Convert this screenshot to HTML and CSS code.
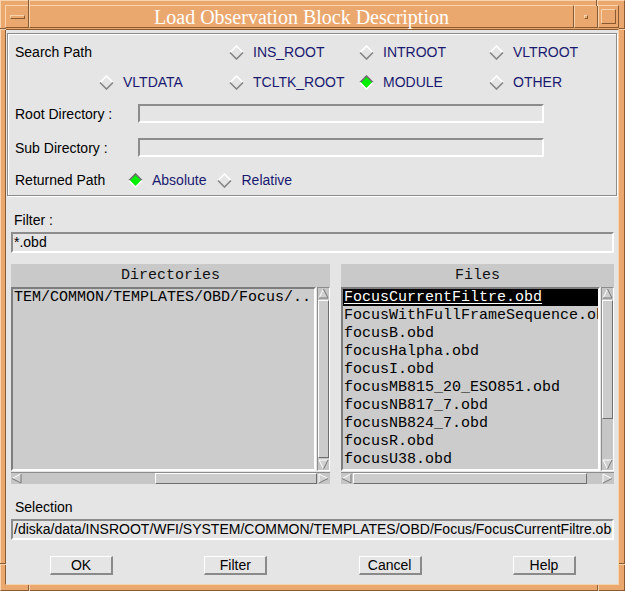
FILE: index.html
```html
<!DOCTYPE html>
<html>
<head>
<meta charset="utf-8">
<link rel="stylesheet" href="styles.css">
</head>
<body>
<div class="window">
  <span class="notch nv" style="left:27px;top:-1px"></span>
  <span class="notch nv" style="left:595px;top:-1px"></span>
  <span class="notch nv" style="left:27px;bottom:-1px"></span>
  <span class="notch nv" style="left:596px;bottom:-1px"></span>
  <span class="notch nh" style="left:-1px;top:27px"></span>
  <span class="notch nh" style="right:-1px;top:27px"></span>
  <span class="notch nh" style="left:-1px;top:562px"></span>
  <span class="notch nh" style="right:-1px;top:562px"></span>

  <div class="titlebar">
    <div class="tb-seg tb-menu"><span class="menu-bar"></span></div>
    <div class="tb-seg tb-title">Load Observation Block Description</div>
    <div class="tb-seg tb-min"><span class="min-dot"></span></div>
    <div class="tb-seg tb-max"><span class="max-box"></span></div>
  </div>

  <div class="content">
    <div class="group">
      <div class="radio-grid">
        <div class="label">Search Path</div>
        <div></div>
        <div class="radio"><svg class="dia" viewBox="0 0 15 15"><path d="M1 7.5L7.5 1L14 7.5" fill="none" stroke="#ffffff" stroke-width="1.6"/><path d="M1 7.5L7.5 14L14 7.5" fill="none" stroke="#858585" stroke-width="1.6"/></svg><span>INS_ROOT</span></div>
        <div class="radio"><svg class="dia" viewBox="0 0 15 15"><path d="M1 7.5L7.5 1L14 7.5" fill="none" stroke="#ffffff" stroke-width="1.6"/><path d="M1 7.5L7.5 14L14 7.5" fill="none" stroke="#858585" stroke-width="1.6"/></svg><span>INTROOT</span></div>
        <div class="radio"><svg class="dia" viewBox="0 0 15 15"><path d="M1 7.5L7.5 1L14 7.5" fill="none" stroke="#ffffff" stroke-width="1.6"/><path d="M1 7.5L7.5 14L14 7.5" fill="none" stroke="#858585" stroke-width="1.6"/></svg><span>VLTROOT</span></div>

        <div></div>
        <div class="radio"><svg class="dia" viewBox="0 0 15 15"><path d="M1 7.5L7.5 1L14 7.5" fill="none" stroke="#ffffff" stroke-width="1.6"/><path d="M1 7.5L7.5 14L14 7.5" fill="none" stroke="#858585" stroke-width="1.6"/></svg><span>VLTDATA</span></div>
        <div class="radio"><svg class="dia" viewBox="0 0 15 15"><path d="M1 7.5L7.5 1L14 7.5" fill="none" stroke="#ffffff" stroke-width="1.6"/><path d="M1 7.5L7.5 14L14 7.5" fill="none" stroke="#858585" stroke-width="1.6"/></svg><span>TCLTK_ROOT</span></div>
        <div class="radio"><svg class="dia" viewBox="0 0 15 15"><polygon points="7.5,1 14,7.5 7.5,14 1,7.5" fill="#00f000"/><path d="M1 7.5L7.5 1L14 7.5" fill="none" stroke="#6e6e6e" stroke-width="1.6"/><path d="M1 7.5L7.5 14L14 7.5" fill="none" stroke="#ffffff" stroke-width="1.6"/></svg><span>MODULE</span></div>
        <div class="radio"><svg class="dia" viewBox="0 0 15 15"><path d="M1 7.5L7.5 1L14 7.5" fill="none" stroke="#ffffff" stroke-width="1.6"/><path d="M1 7.5L7.5 14L14 7.5" fill="none" stroke="#858585" stroke-width="1.6"/></svg><span>OTHER</span></div>
      </div>

      <div class="field-row first">
        <span class="field-label">Root Directory :</span>
        <div class="entry short"></div>
      </div>
      <div class="field-row second">
        <span class="field-label">Sub Directory :</span>
        <div class="entry short"></div>
      </div>
      <div class="returned-row">
        <span class="ret-label">Returned Path</span>
        <div class="radio"><svg class="dia" viewBox="0 0 15 15"><polygon points="7.5,1 14,7.5 7.5,14 1,7.5" fill="#00f000"/><path d="M1 7.5L7.5 1L14 7.5" fill="none" stroke="#6e6e6e" stroke-width="1.6"/><path d="M1 7.5L7.5 14L14 7.5" fill="none" stroke="#ffffff" stroke-width="1.6"/></svg><span>Absolute</span></div>
        <div class="radio rel"><svg class="dia" viewBox="0 0 15 15"><path d="M1 7.5L7.5 1L14 7.5" fill="none" stroke="#ffffff" stroke-width="1.6"/><path d="M1 7.5L7.5 14L14 7.5" fill="none" stroke="#858585" stroke-width="1.6"/></svg><span>Relative</span></div>
      </div>
    </div>

    <div class="lower">
      <div class="filter-label">Filter :</div>
      <div class="entry wide">*.obd</div>

      <div class="panes">
        <div class="pane dirs">
          <div class="pane-head">Directories</div>
          <div class="pane-body">
            <div class="list">
              <div class="item">TEM/COMMON/TEMPLATES/OBD/Focus/..</div>
            </div>
            <div class="vscroll">
              <svg class="arr" viewBox="0 0 11 11"><polygon points="5.5,1 10,10 1,10" fill="#d0d0d0"/><path d="M1 10L5.5 1" stroke="#fff" fill="none"/><path d="M5.5 1L10 10L1 10" stroke="#777" fill="none"/></svg>
              <div class="track-v"><div class="thumb-v" style="height:100%"></div></div>
              <svg class="arr" viewBox="0 0 11 11"><polygon points="1,1 10,1 5.5,10" fill="#d0d0d0"/><path d="M5.5 10L1 1L10 1" stroke="#fff" fill="none"/><path d="M10 1L5.5 10" stroke="#777" fill="none"/></svg>
            </div>
            <div class="hscroll">
              <svg class="arr-h" viewBox="0 0 11 11"><polygon points="1,5.5 10,1 10,10" fill="#d0d0d0"/><path d="M10 1L1 5.5" stroke="#fff" fill="none"/><path d="M1 5.5L10 10L10 1" stroke="#777" fill="none"/></svg>
              <div class="track-h"><div class="thumb-h" style="margin-left:133px;width:162px"></div></div>
              <svg class="arr-h end" viewBox="0 0 11 11"><polygon points="1,1 10,5.5 1,10" fill="#d0d0d0"/><path d="M1 10L1 1L10 5.5" stroke="#fff" fill="none"/><path d="M10 5.5L1 10" stroke="#777" fill="none"/></svg>
            </div>
          </div>
        </div>

        <div class="pane files">
          <div class="pane-head">Files</div>
          <div class="pane-body">
            <div class="list">
              <div class="item selected"><span>FocusCurrentFiltre.obd</span></div>
              <div class="item">FocusWithFullFrameSequence.obd</div>
              <div class="item">focusB.obd</div>
              <div class="item">focusHalpha.obd</div>
              <div class="item">focusI.obd</div>
              <div class="item">focusMB815_20_ESO851.obd</div>
              <div class="item">focusNB817_7.obd</div>
              <div class="item">focusNB824_7.obd</div>
              <div class="item">focusR.obd</div>
              <div class="item">focusU38.obd</div>
            </div>
            <div class="vscroll">
              <svg class="arr" viewBox="0 0 11 11"><polygon points="5.5,1 10,10 1,10" fill="#d0d0d0"/><path d="M1 10L5.5 1" stroke="#fff" fill="none"/><path d="M5.5 1L10 10L1 10" stroke="#777" fill="none"/></svg>
              <div class="track-v"><div class="thumb-v" style="height:119px"></div></div>
              <svg class="arr" viewBox="0 0 11 11"><polygon points="1,1 10,1 5.5,10" fill="#d0d0d0"/><path d="M5.5 10L1 1L10 1" stroke="#fff" fill="none"/><path d="M10 1L5.5 10" stroke="#777" fill="none"/></svg>
            </div>
            <div class="hscroll">
              <svg class="arr-h" viewBox="0 0 11 11"><polygon points="1,5.5 10,1 10,10" fill="#d0d0d0"/><path d="M10 1L1 5.5" stroke="#fff" fill="none"/><path d="M1 5.5L10 10L10 1" stroke="#777" fill="none"/></svg>
              <div class="track-h"><div class="thumb-h" style="margin-left:1px;width:234px"></div></div>
              <svg class="arr-h end" viewBox="0 0 11 11"><polygon points="1,1 10,5.5 1,10" fill="#d0d0d0"/><path d="M1 10L1 1L10 5.5" stroke="#fff" fill="none"/><path d="M10 5.5L1 10" stroke="#777" fill="none"/></svg>
            </div>
          </div>
        </div>
      </div>

      <div class="sel-label">Selection</div>
      <div class="entry wide sel">/diska/data/INSROOT/WFI/SYSTEM/COMMON/TEMPLATES/OBD/Focus/FocusCurrentFiltre.obd</div>

      <div class="buttons">
        <div class="btn">OK</div>
        <div class="btn">Filter</div>
        <div class="btn">Cancel</div>
        <div class="btn">Help</div>
      </div>
    </div>
  </div>
</div>
</body>
</html>
```

FILE: styles.css
```css
html, body {
  margin: 0;
  padding: 0;
}
body {
  width: 625px;
  height: 591px;
  overflow: hidden;
  font-family: "Liberation Sans", Arial, sans-serif;
  font-size: 14px;
  color: #000;
}

.window {
  position: relative;
  box-sizing: border-box;
  width: 625px;
  height: 591px;
  background: #eba86e;
  border-style: solid;
  border-width: 1px;
  border-color: #f7d3ae #8a5a30 #8a5a30 #f7d3ae;
  padding: 4px 5px 5px 4px;
  display: flex;
  flex-direction: column;
  gap: 1px;
}

.notch {
  position: absolute;
  box-sizing: border-box;
}
.notch.nv {
  width: 2px;
  height: 6px;
  border-left: 1px solid #8a5a30;
  border-right: 1px solid #f7d3ae;
}
.notch.nh {
  width: 6px;
  height: 2px;
  border-top: 1px solid #8a5a30;
  border-bottom: 1px solid #f7d3ae;
}

/* title bar */
.titlebar {
  display: flex;
  height: 23px;
  flex: none;
}
.tb-seg {
  box-sizing: border-box;
  height: 23px;
  border-style: solid;
  border-width: 1px;
  border-color: #f7d3ae #8a5a30 #8a5a30 #f7d3ae;
  background: #eba86e;
  display: flex;
  align-items: center;
  justify-content: center;
}
.tb-menu { width: 24px; }
.tb-title {
  flex: 1;
  font-family: "Liberation Serif", "Times New Roman", serif;
  font-size: 20px;
  line-height: 20px;
  color: #ffffff;
  padding-top: 1px;
}
.tb-min { width: 24px; }
.tb-max { width: 21px; }

.menu-bar {
  box-sizing: border-box;
  width: 15px;
  height: 4px;
  border-style: solid;
  border-width: 1px;
  border-color: #f7d3ae #8a5a30 #8a5a30 #f7d3ae;
}
.min-dot {
  box-sizing: border-box;
  width: 4px;
  height: 4px;
  border-style: solid;
  border-width: 1px;
  border-color: #f7d3ae #8a5a30 #8a5a30 #f7d3ae;
}
.max-box {
  box-sizing: border-box;
  width: 15px;
  height: 15px;
  border-style: solid;
  border-width: 1px;
  border-color: #f7d3ae #8a5a30 #8a5a30 #f7d3ae;
}

/* content */
.content {
  flex: 1;
  box-sizing: border-box;
  background: #e5e5e5;
  border-style: solid;
  border-width: 1px;
  border-color: #8a5a30 #f7d3ae #f7d3ae #8a5a30;
  display: flex;
  flex-direction: column;
}

.group {
  margin: 3px 1px 0 1px;
  border: 1px solid #8c8c8c;
  box-shadow: inset 1px 1px 0 #ffffff, 1px 1px 0 #ffffff;
  padding: 3px 8px 5px 7px;
}

.radio-grid {
  display: grid;
  grid-template-columns: 84px 130px 130px 130px auto;
  grid-auto-rows: 30px;
  align-items: center;
}
.label, .field-label, .ret-label {
  white-space: nowrap;
}

.radio {
  display: flex;
  align-items: center;
  gap: 9px;
  color: #191970;
  white-space: nowrap;
}
.dia {
  width: 15px;
  height: 15px;
  flex: none;
}

.field-row {
  display: flex;
  align-items: center;
  height: 19px;
}
.field-row.first { margin-top: 7px; }
.field-row.second { margin-top: 15px; }
.field-label { width: 123px; }

.entry {
  box-sizing: border-box;
  border-style: solid;
  border-width: 2px;
  border-color: #8c8c8c #ffffff #ffffff #8c8c8c;
  background: #e5e5e5;
}
.entry.short {
  width: 406px;
  height: 19px;
}

.returned-row {
  display: flex;
  align-items: center;
  height: 20px;
  margin-top: 13px;
}
.ret-label { width: 113px; }
.radio.rel { margin-left: 11px; }

/* lower part */
.lower {
  display: flex;
  flex-direction: column;
  padding: 0 4px 0 5px;
}
.filter-label {
  margin-top: 16px;
  line-height: 16px;
  padding-left: 3px;
}
.entry.wide {
  margin-top: 4px;
  height: 21px;
  line-height: 17px;
  padding-left: 1px;
  white-space: nowrap;
  overflow: hidden;
}

.panes {
  display: flex;
  gap: 11px;
  margin-top: 11px;
}
.pane {
  display: flex;
  flex-direction: column;
}
.pane.dirs { width: 319px; }
.pane.files { flex: 1; min-width: 0; }

.pane-head {
  height: 23px;
  line-height: 23px;
  background: #c9c9c9;
  text-align: center;
  font-family: "Liberation Mono", "Courier New", monospace;
  font-size: 15px;
  color: #111;
}
.pane-body {
  display: grid;
  grid-template-columns: 1fr 13px;
  grid-template-rows: 184px 12px;
  column-gap: 1px;
  row-gap: 1px;
}

.list {
  box-sizing: border-box;
  min-width: 0;
  border-style: solid;
  border-width: 2px;
  border-color: #7d7d7d #ffffff #ffffff #7d7d7d;
  background: #cccccc;
  overflow: hidden;
  font-family: "Liberation Mono", "Courier New", monospace;
  font-size: 15px;
  line-height: 18px;
  white-space: nowrap;
}
.item {
  padding-left: 1px;
  height: 18px;
}
.item.selected {
  background: #000;
  color: #fff;
  height: 17px;
  line-height: 17px;
  margin-bottom: 1px;
}
.item.selected span {
  text-decoration: underline;
  text-underline-offset: 2px;
}

.vscroll {
  box-sizing: border-box;
  display: flex;
  flex-direction: column;
  border-style: solid;
  border-width: 1px;
  border-color: #8c8c8c #ffffff #ffffff #8c8c8c;
  background: #c6c6c6;
}
.arr {
  width: 11px;
  height: 11px;
  flex: none;
}
.track-v {
  flex: 1;
  display: flex;
  flex-direction: column;
  padding: 1px 0;
}
.thumb-v {
  box-sizing: border-box;
  border-style: solid;
  border-width: 1px;
  border-color: #ffffff #6f6f6f #6f6f6f #ffffff;
  background: #cccccc;
}

.hscroll {
  grid-column: 1 / span 2;
  box-sizing: border-box;
  display: flex;
  border-style: solid;
  border-width: 1px 0 0 0;
  border-color: #8c8c8c;
  background: #c6c6c6;
}
.arr-h {
  width: 11px;
  height: 11px;
  flex: none;
}
.arr-h.end {
  margin-left: 1px;
  margin-right: 1px;
}
.track-h {
  flex: 1;
  display: flex;
  min-width: 0;
}
.thumb-h {
  box-sizing: border-box;
  height: 11px;
  border-style: solid;
  border-width: 1px;
  border-color: #ffffff #6f6f6f #6f6f6f #ffffff;
  background: #cccccc;
}

.sel-label {
  margin-top: 15px;
  line-height: 16px;
  padding-left: 4px;
}

.buttons {
  display: flex;
  justify-content: space-between;
  margin-top: 16px;
  padding: 0 38px 0 39px;
}
.btn {
  box-sizing: border-box;
  width: 63px;
  height: 19px;
  border-style: solid;
  border-width: 1px 2px 2px 1px;
  border-color: #ffffff #8a8a8a #8a8a8a #ffffff;
  text-align: center;
  line-height: 16px;
  background: #e5e5e5;
}
```
